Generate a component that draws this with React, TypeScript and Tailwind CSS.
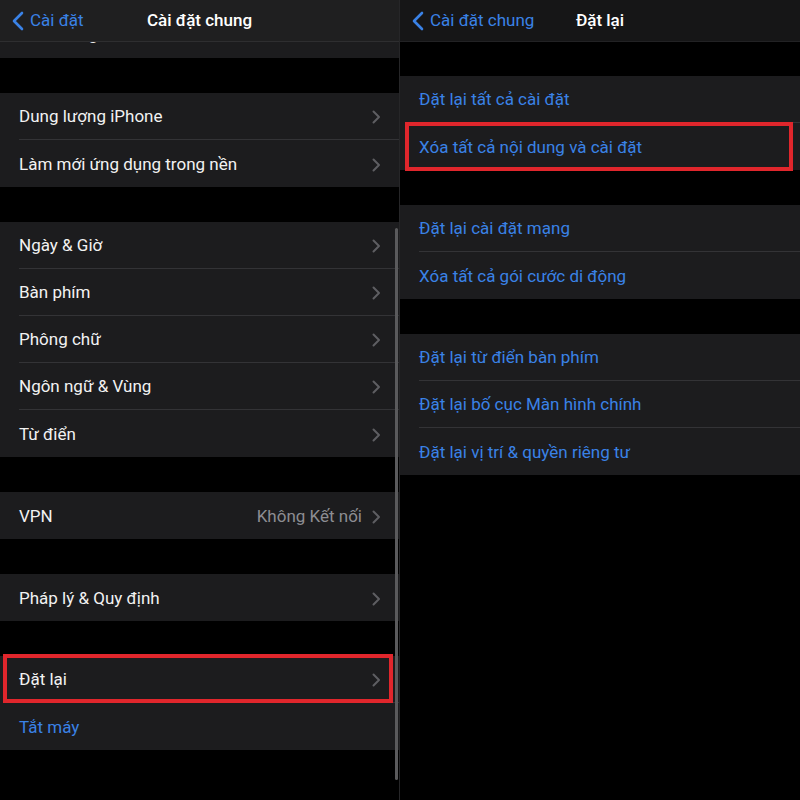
import React from "react";

const font = { fontFamily: "Roboto, 'Noto Sans', 'Liberation Sans', sans-serif" };

function Chevron() {
  return (
    <svg width="9" height="14" viewBox="0 0 9 14" className="shrink-0">
      <path d="M1.5 1.5 L7 7 L1.5 12.5" fill="none" stroke="#5e5e62" strokeWidth="2" strokeLinecap="round" strokeLinejoin="round" />
    </svg>
  );
}

function BackChevron() {
  return (
    <svg width="12" height="20" viewBox="0 0 12 20" className="shrink-0">
      <path d="M10 2 L2 10 L10 18" fill="none" stroke="#3a82e6" strokeWidth="2.6" strokeLinecap="round" strokeLinejoin="round" />
    </svg>
  );
}

type Row = { label: string; value?: string; blue?: boolean; chevron?: boolean; boxed?: boolean };

function Group({ rows, left }: { rows: Row[]; left: boolean }) {
  return (
    <div className="bg-[#1c1c1e]">
      {rows.map((r, i) => (
        <div key={i} className="relative h-[47px] flex items-center pl-[19px]">
          <div
            className={
              "flex-1 h-full flex items-center pr-[18px] pt-[2px] " +
              (i < rows.length - 1 ? "border-b border-[#333336]" : "")
            }
          >
            <span className={"flex-1 text-[17px] " + (r.blue ? "text-[#3a82e6]" : "text-[#f2f2f2]")}>{r.label}</span>
            {r.value && <span className="text-[17px] text-[#8d8d92] mr-[10px]">{r.value}</span>}
            {r.chevron && <Chevron />}
          </div>
          {r.boxed && (
            <div
              className={
                "absolute border-[4px] border-[#e0262c] " +
                (left ? "left-[3px] right-[6px] top-[-2px] bottom-0" : "left-[5px] right-[7px] top-[-1px] bottom-[-1px]")
              }
            />
          )}
        </div>
      ))}
    </div>
  );
}

function Gap() {
  return <div className="h-[35px]" />;
}

export default function App() {
  return (
    <div className="w-[800px] h-[800px] bg-black flex overflow-hidden" style={font}>
      {/* Left panel */}
      <div className="relative w-[400px] h-full border-r border-[#262628] flex flex-col">
        <div className="h-[16px] overflow-hidden bg-[#1c1c1e] shrink-0 order-2">
          <div className="h-[47px] mt-[-31px] flex items-center pl-[19px] text-[17px] text-[#f2f2f2]">Hình trong hình</div>
        </div>
        <div className="h-[42px] bg-[#1f1f20] border-b border-[#2e2e30] flex items-center relative shrink-0 order-1 z-10">
          <div className="flex items-center pl-[12px] gap-[6px]">
            <BackChevron />
            <span className="text-[17px] text-[#3a82e6]">Cài đặt</span>
          </div>
          <div className="absolute inset-0 flex items-center justify-center pointer-events-none">
            <span className="text-[17px] font-medium text-white">Cài đặt chung</span>
          </div>
        </div>
        <div className="order-3 flex flex-col">
          <Gap />
          <Group
            left
            rows={[
              { label: "Dung lượng iPhone", chevron: true },
              { label: "Làm mới ứng dụng trong nền", chevron: true },
            ]}
          />
          <Gap />
          <Group
            left
            rows={[
              { label: "Ngày & Giờ", chevron: true },
              { label: "Bàn phím", chevron: true },
              { label: "Phông chữ", chevron: true },
              { label: "Ngôn ngữ & Vùng", chevron: true },
              { label: "Từ điển", chevron: true },
            ]}
          />
          <Gap />
          <Group left rows={[{ label: "VPN", value: "Không Kết nối", chevron: true }]} />
          <Gap />
          <Group left rows={[{ label: "Pháp lý & Quy định", chevron: true }]} />
          <Gap />
          <Group
            left
            rows={[
              { label: "Đặt lại", chevron: true, boxed: true },
              { label: "Tắt máy", blue: true },
            ]}
          />
        </div>
        <div className="absolute left-[395px] top-[228px] w-[3px] h-[552px] rounded-full bg-[#5a5a5c]" />
      </div>

      {/* Right panel */}
      <div className="flex-1 h-full flex flex-col">
        <div className="h-[42px] bg-[#161617] border-b border-[#222224] flex items-center relative shrink-0">
          <div className="flex items-center pl-[12px] gap-[6px]">
            <BackChevron />
            <span className="text-[17px] text-[#3a82e6]">Cài đặt chung</span>
          </div>
          <div className="absolute inset-0 flex items-center justify-center pointer-events-none">
            <span className="text-[17px] font-medium text-white">Đặt lại</span>
          </div>
        </div>
        <div className="h-[34px] shrink-0" />
        <Group
          left={false}
          rows={[
            { label: "Đặt lại tất cả cài đặt", blue: true },
            { label: "Xóa tất cả nội dung và cài đặt", blue: true, boxed: true },
          ]}
        />
        <Gap />
        <Group
          left={false}
          rows={[
            { label: "Đặt lại cài đặt mạng", blue: true },
            { label: "Xóa tất cả gói cước di động", blue: true },
          ]}
        />
        <Gap />
        <Group
          left={false}
          rows={[
            { label: "Đặt lại từ điển bàn phím", blue: true },
            { label: "Đặt lại bố cục Màn hình chính", blue: true },
            { label: "Đặt lại vị trí & quyền riêng tư", blue: true },
          ]}
        />
      </div>
    </div>
  );
}
